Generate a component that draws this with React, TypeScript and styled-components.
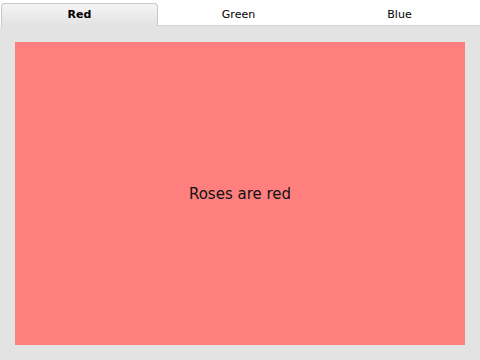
import React, { useState } from "react";
import styled, { createGlobalStyle } from "styled-components";

const GlobalStyle = createGlobalStyle`
  html, body {
    margin: 0;
    padding: 0;
    background: #ffffff;
  }
  body {
    font-family: "DejaVu Sans", "Liberation Sans", sans-serif;
  }
`;

const Window = styled.div`
  width: 480px;
  height: 360px;
  display: flex;
  flex-direction: column;
  background: #ffffff;
`;

const TabBar = styled.div`
  height: 26px;
  display: flex;
  align-items: flex-end;
  padding-left: 1px;
  box-sizing: border-box;
`;

const Tab = styled.button<{ $active: boolean }>`
  flex: 1;
  height: ${(p) => (p.$active ? "23px" : "22px")};
  margin: 0;
  padding: 0;
  font-family: inherit;
  font-size: 11px;
  color: #000;
  font-weight: ${(p) => (p.$active ? "bold" : "normal")};
  background: ${(p) =>
    p.$active ? "linear-gradient(#f4f4f4, #e3e3e3)" : "transparent"};
  border: ${(p) => (p.$active ? "1px solid #c8c8c8" : "none")};
  border-bottom: ${(p) => (p.$active ? "none" : "1px solid #d2d2d8")};
  border-radius: ${(p) => (p.$active ? "4px 4px 0 0" : "0")};
  cursor: pointer;
  line-height: 20px;
  text-align: center;
  &:first-child {
    flex: 0 0 157px;
  }
  &:focus {
    outline: none;
  }
`;

const Pane = styled.div`
  flex: 1;
  background: #e3e3e3;
  padding: 16px 15px 15px 15px;
  display: flex;
`;

const Panel = styled.div<{ $color: string }>`
  flex: 1;
  background: ${(p) => p.$color};
  display: flex;
  align-items: center;
  justify-content: center;
  font-size: 15px;
  color: #111;
`;

const tabs = [
  { name: "Red", color: "#ff7f7f", text: "Roses are red" },
  { name: "Green", color: "#7fff7f", text: "Grass is green" },
  { name: "Blue", color: "#7f7fff", text: "Skies are blue" },
];

export default function App() {
  const [active, setActive] = useState(0);
  const cur = tabs[active];
  return (
    <Window>
      <GlobalStyle />
      <TabBar>
        {tabs.map((t, i) => (
          <Tab key={t.name} $active={i === active} onClick={() => setActive(i)}>
            {t.name}
          </Tab>
        ))}
      </TabBar>
      <Pane>
        <Panel $color={cur.color}>{cur.text}</Panel>
      </Pane>
    </Window>
  );
}
